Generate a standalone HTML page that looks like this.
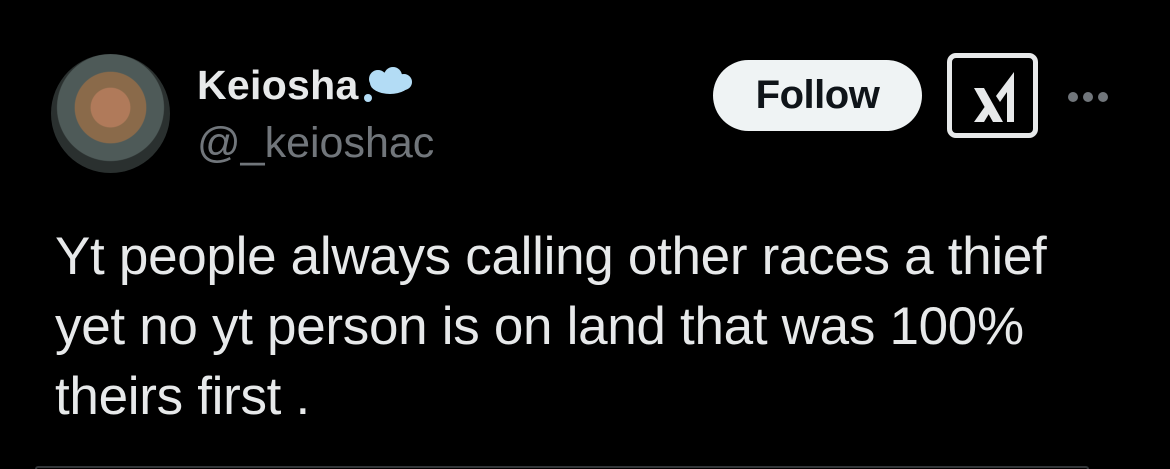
<!DOCTYPE html>
<html><head><meta charset="utf-8"><style>
html,body{margin:0;width:1170px;height:469px;background:#000;overflow:hidden}
body{font-family:"Liberation Sans",sans-serif;position:relative}
.av{position:absolute;left:51px;top:54px;width:119px;height:119px;border-radius:50%;background:radial-gradient(circle at 50% 45%,#b07a5a 0 22%,#8a6a4a 23% 40%,#4e5a58 41% 60%,#2a302f 61%)}
.name{position:absolute;left:197px;top:62px;font-size:41px;font-weight:bold;color:#e7e9ea;letter-spacing:0.3px}
.handle{position:absolute;left:197px;top:119px;font-size:43px;color:#71767b}
.follow{position:absolute;left:713px;top:60px;width:209px;height:71px;border-radius:36px;background:#eff3f4;color:#0f1419;font-weight:bold;font-size:40px;text-align:center;line-height:71px;letter-spacing:-0.5px}
.x{position:absolute;left:947px;top:53px;width:81px;height:75px;border:5px solid #e7e9ea;border-radius:9px}
.dots{position:absolute;left:1068px;top:89px}
.dots i{display:inline-block;width:10px;height:10px;border-radius:50%;background:#71767b;margin-right:5px}
.t{position:absolute;left:55px;top:222px;font-size:53px;line-height:70px;color:#e7e9ea;letter-spacing:-0.3px;white-space:nowrap}
.card{position:absolute;left:35px;top:466px;width:1050px;height:1px;border:2px solid #333639;border-bottom:0;border-radius:20px 20px 0 0}
</style></head><body>
<div class="av"></div>
<div class="name">Keiosha<svg width="58" height="40" viewBox="0 0 58 40" style="vertical-align:-8px;margin-left:1px"><ellipse cx="30" cy="16" rx="20" ry="11" fill="#b3dcf5"/><circle cx="18" cy="12" r="9" fill="#b3dcf5"/><circle cx="33" cy="9" r="9" fill="#b3dcf5"/><circle cx="44" cy="15" r="8" fill="#b3dcf5"/><circle cx="8" cy="31" r="4" fill="#b3dcf5"/></svg></div>
<div class="handle">@_keioshac</div>
<div class="follow">Follow</div>
<div class="x"><svg width="81" height="75" viewBox="0 0 81 75"><polygon points="22,30 32,30 51,64 41,64" fill="#e7e9ea"/><polygon points="22,64 32,64 38,54 34,47" fill="#e7e9ea"/><polygon points="44,38 62,14 62,24 48,44" fill="#e7e9ea"/><rect x="55" y="24" width="7" height="40" fill="#e7e9ea"/></svg></div>
<div class="dots"><i></i><i></i><i></i></div>
<div class="t">Yt people always calling other races a thief<br>yet no yt person is on land that was 100%<br>theirs first .</div>
<div class="card"></div>
</body></html>
